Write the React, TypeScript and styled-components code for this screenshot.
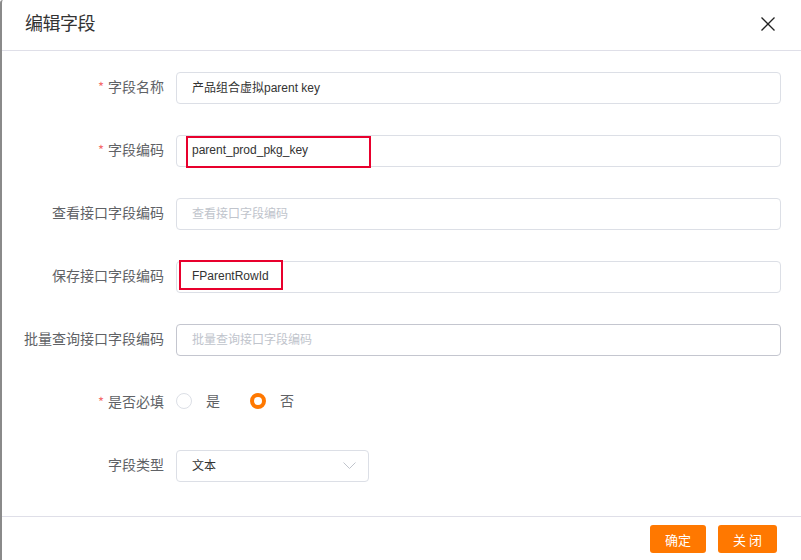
import styled, { createGlobalStyle } from "styled-components";

const GlobalStyle = createGlobalStyle`
    html, body {
        margin: 0;
        padding: 0;
        background: #fff;
    }
    body {
        font-family: "Liberation Sans", "Noto Sans CJK SC", sans-serif;
    }
`;

type Field = {
    label: string;
    required?: boolean;
    value?: string;
    placeholder?: string;
    mark?: { left: number; top: number; width: number; height: number };
    strong?: boolean;
};

const fields: Field[] = [
    { label: "字段名称", required: true, value: "产品组合虚拟parent key" },
    { label: "字段编码", required: true, value: "parent_prod_pkg_key", mark: { left: 10, top: 1, width: 185, height: 32 } },
    { label: "查看接口字段编码", placeholder: "查看接口字段编码" },
    { label: "保存接口字段编码", value: "FParentRowId", mark: { left: 3, top: -1, width: 104, height: 30 } },
    { label: "批量查询接口字段编码", placeholder: "批量查询接口字段编码", strong: true },
];

function App() {
    return <Page>
        <GlobalStyle />
        <Dialog>
            <Header>
                <Title>编辑字段</Title>
                <CloseIcon width="14" height="14" viewBox="0 0 14 14">
                    <path d="M0.5 0.5 L13.5 13.5 M13.5 0.5 L0.5 13.5" stroke="#222" strokeWidth="1.3" fill="none" />
                </CloseIcon>
            </Header>
            <Body>
                {fields.map((f) => (
                    <Row key={f.label}>
                        <Label>{f.required && <Star>*</Star>}{f.label}</Label>
                        <InputWrap>
                            <Input $strong={f.strong} $empty={!f.value}>{f.value || f.placeholder}</Input>
                            {f.mark && <Mark style={{ left: f.mark.left, top: f.mark.top, width: f.mark.width, height: f.mark.height }} />}
                        </InputWrap>
                    </Row>
                ))}
                <Row>
                    <Label><Star>*</Star>是否必填</Label>
                    <Radios>
                        <RadioItem><Radio />是</RadioItem>
                        <RadioItem><Radio $checked />否</RadioItem>
                    </Radios>
                </Row>
                <Row>
                    <Label>字段类型</Label>
                    <Select>
                        <span>文本</span>
                        <svg width="13" height="8" viewBox="0 0 13 8">
                            <path d="M0.5 0.5 L6.5 6.5 L12.5 0.5" stroke="#c0c4cc" strokeWidth="1" fill="none" />
                        </svg>
                    </Select>
                </Row>
            </Body>
            <Footer>
                <Button>确定</Button>
                <Button $wide>关 闭</Button>
            </Footer>
        </Dialog>
    </Page>;
}

const Page = styled.div`
    width: 801px;
    height: 560px;
    overflow: hidden;
`;

const Dialog = styled.div`
    display: flex;
    flex-direction: column;
    height: 560px;
    box-sizing: border-box;
    border-left: 2px solid #8a8a8a;
    border-top-left-radius: 3px;
    background: #fff;
`;

const Header = styled.div`
    display: flex;
    align-items: center;
    justify-content: space-between;
    height: 50px;
    padding: 0 26px 0 23px;
    border-bottom: 1px solid #dfdfe8;
`;

const Title = styled.div`
    font-family: "Noto Sans CJK SC", sans-serif;
    font-size: 18px;
    color: #333;
    margin-top: -6px;
    letter-spacing: -0.5px;
`;

const CloseIcon = styled.svg`
    margin-top: -2px;
`;

const Body = styled.div`
    flex: 1;
    display: flex;
    flex-direction: column;
    gap: 31px;
    padding: 21px 20px 0 0;
`;

const Row = styled.div`
    display: grid;
    grid-template-columns: 162px 1fr;
    column-gap: 12px;
    align-items: center;
    height: 32px;
`;

const Label = styled.div`
    text-align: right;
    font-family: "Noto Sans CJK SC", sans-serif;
    font-size: 14px;
    color: #606266;
    white-space: nowrap;
    padding-bottom: 4px;
`;

const Star = styled.span`
    color: #f56c6c;
    font-size: 13px;
    margin-right: 4px;
`;

const InputWrap = styled.div`
    position: relative;
    height: 32px;
`;

const Input = styled.div<{ $strong?: boolean; $empty?: boolean }>`
    box-sizing: border-box;
    height: 32px;
    display: flex;
    align-items: center;
    padding: 0 15px 3px;
    border: 1px solid ${(p) => (p.$strong ? "#c4c6cf" : "#dcdfe6")};
    border-radius: 4px;
    font-family: "Liberation Sans", "Noto Sans CJK SC", sans-serif;
    font-size: 12px;
    color: ${(p) => (p.$empty ? "#c0c4cc" : "#333")};
`;

const Mark = styled.div`
    position: absolute;
    box-sizing: border-box;
    border: 2px solid #e8002d;
`;

const Radios = styled.div`
    display: flex;
    gap: 30px;
    padding-bottom: 7px;
`;

const RadioItem = styled.label`
    display: flex;
    align-items: center;
    gap: 14px;
    font-family: "Noto Sans CJK SC", sans-serif;
    font-size: 14px;
    color: #606266;
`;

const Radio = styled.span<{ $checked?: boolean }>`
    box-sizing: border-box;
    width: 16px;
    height: 16px;
    border-radius: 50%;
    border: ${(p) => (p.$checked ? "4.5px solid #ff7800" : "1px solid #dcdfe6")};
    background: #fff;
    margin-top: 2px;
`;

const Select = styled.div`
    box-sizing: border-box;
    width: 193px;
    height: 32px;
    display: flex;
    align-items: center;
    justify-content: space-between;
    padding: 0 12px 3px 15px;
    border: 1px solid #dcdfe6;
    border-radius: 4px;
    font-family: "Noto Sans CJK SC", sans-serif;
    font-size: 12px;
    color: #333;

    & svg {
        margin-top: 3px;
    }
`;

const Footer = styled.div`
    display: flex;
    justify-content: flex-end;
    gap: 12px;
    height: 44px;
    padding: 8px 24px 0 0;
    box-sizing: border-box;
    border-top: 1px solid #dfdfe8;
`;

const Button = styled.button<{ $wide?: boolean }>`
    width: ${(p) => (p.$wide ? "59px" : "56px")};
    height: 28px;
    border: none;
    border-radius: 3px;
    background: #ff7800;
    color: #fff;
    font-family: "Noto Sans CJK SC", sans-serif;
    font-size: 13px;
    padding: 0;
`;

export default App;
